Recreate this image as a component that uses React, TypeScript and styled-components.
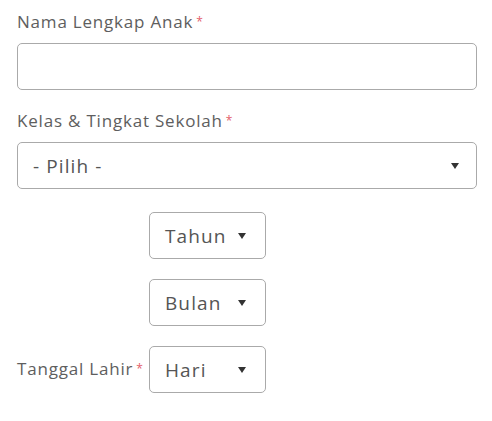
import styled, { createGlobalStyle } from "styled-components"

const GlobalStyle = createGlobalStyle`
  html, body {
    margin: 0;
    padding: 0;
    background: #fff;
  }
  body {
    font-family: "Open Sans", "Noto Sans", sans-serif;
    color: #555;
  }
`

const Caret = () => (
  <svg width="8" height="6" viewBox="0 0 8 6">
    <path d="M0 0h8L4 6z" fill="#333" />
  </svg>
)

const App = () => {
  return (
    <>
      <GlobalStyle />
      <Form>
        <Group>
          <Label>Nama Lengkap Anak<Req>*</Req></Label>
          <TextInput />
        </Group>

        <Group>
          <Label>Kelas &amp; Tingkat Sekolah<Req>*</Req></Label>
          <Select $wide>
            <SelectText>- Pilih -</SelectText>
            <Caret />
          </Select>
        </Group>

        <DateRow>
          <InlineLabel>Tanggal Lahir<Req>*</Req></InlineLabel>
          <DateStack>
            <Select>
              <SelectText>Tahun</SelectText>
              <Caret />
            </Select>
            <Select>
              <SelectText>Bulan</SelectText>
              <Caret />
            </Select>
            <Select>
              <SelectText>Hari</SelectText>
              <Caret />
            </Select>
          </DateStack>
        </DateRow>
      </Form>
    </>
  )
}

export default App


/* styles */
const Form = styled.div`
  width: 460px;
  padding: 12px 16px 0 17px;
  display: flex;
  flex-direction: column;
  gap: 21px;
`

const Group = styled.div`
  display: flex;
  flex-direction: column;
  gap: 11px;
`

const Label = styled.label`
  font-size: 17px;
  line-height: 20px;
  color: #5e5e5e;
  letter-spacing: 0.8px;
  white-space: nowrap;
`

const Req = styled.span`
  color: #e35d6a;
  font-size: 12px;
  vertical-align: top;
  margin-left: 3px;
`

const TextInput = styled.div`
  height: 45px;
  border: 1px solid #aaa;
  border-radius: 5px;
  background: #fff;
`

const Select = styled.div<{ $wide?: boolean }>`
  box-sizing: border-box;
  width: ${p => (p.$wide ? "460px" : "117px")};
  height: 47px;
  border: 1px solid #aaa;
  border-radius: 5px;
  display: flex;
  align-items: center;
  justify-content: space-between;
  padding: ${p => (p.$wide ? "0 17px 0 15px" : "0 19px 0 15px")};
`

const SelectText = styled.span`
  font-size: 19px;
  color: #555;
  letter-spacing: 1.1px;
`

const DateRow = styled.div`
  display: flex;
  align-items: flex-end;
  gap: 8px;
  margin-top: 2px;
`

const InlineLabel = styled(Label)`
  width: 124px;
  padding-bottom: 14px;
`

const DateStack = styled.div`
  display: flex;
  flex-direction: column;
  gap: 20px;
`
